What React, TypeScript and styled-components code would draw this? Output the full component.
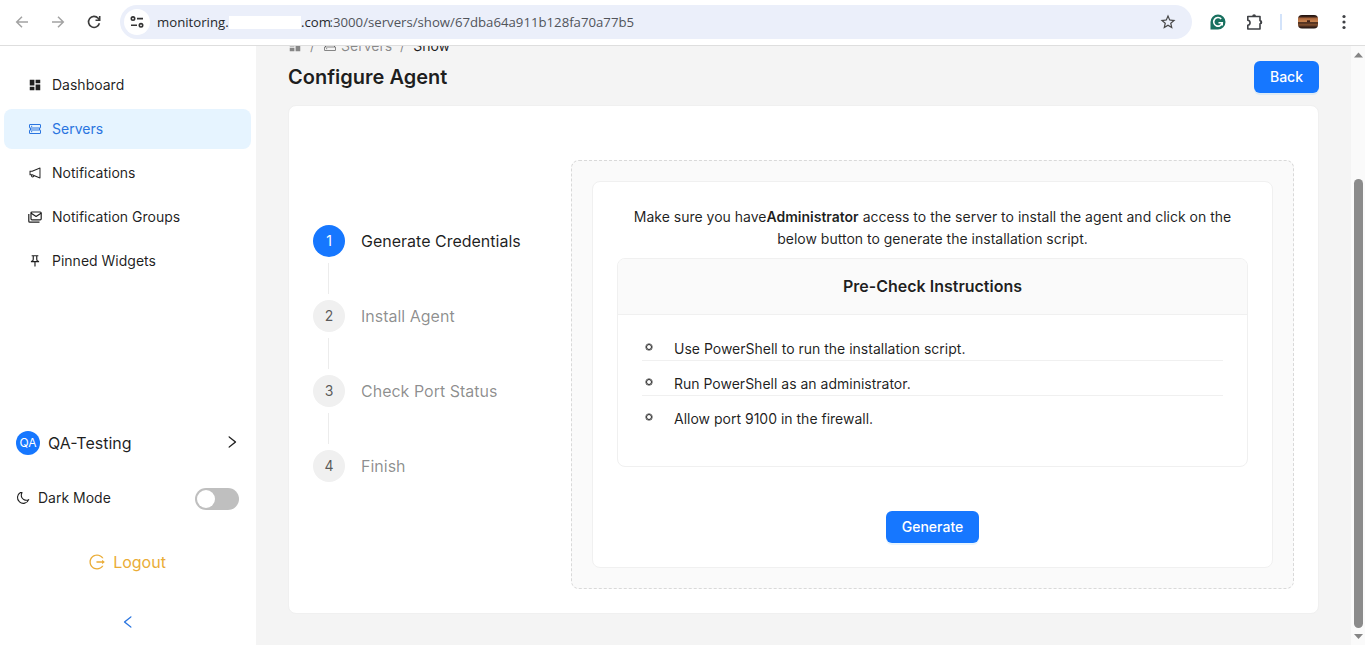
import React from "react";
import styled, { createGlobalStyle } from "styled-components";
import { MdDashboard, MdOutlinePushPin, MdOutlineStarBorder } from "react-icons/md";
import { AiOutlineNotification, AiOutlineLogout, AiOutlineLeft, AiOutlineRight } from "react-icons/ai";

const GlobalStyle = createGlobalStyle`
  *, *::before, *::after { box-sizing: border-box; }
  html, body, #root { height: 645px; margin: 0; overflow: hidden; }
  body { font-family: Inter, sans-serif; font-size: 14px; line-height: 22px; color: rgba(0,0,0,.88); background: #f4f4f4; }
  svg { display: block; flex: none; }
`;

const Window = styled.div`display: flex; flex-direction: column; height: 645px;`;

const Toolbar = styled.header`
  flex: none; display: flex; align-items: center; height: 46px; padding: 0 19px 1px 14px;
  background: #fff; border-bottom: 1px solid #dedede; color: #474747;
`;
const NavIcons = styled.div`display: flex; gap: 20px; width: 106px; align-items: center;`;
const AddressBar = styled.div`
  display: flex; align-items: center; width: 1072px; height: 34px; border-radius: 17px;
  background: #ebeffa; padding: 0 15px 0 4px;
`;
const SiteInfo = styled.span`
  display: flex; align-items: center; justify-content: center; width: 26px; height: 26px;
  border-radius: 50%; background: #fff;
`;
const Url = styled.div`
  display: flex; align-items: center; flex: 1; padding-left: 7px; white-space: pre;
  font: 13.2px/20px "Open Sans", sans-serif; color: #51545a;
`;
const Host = styled.span<{ $width: number }>`
  color: #26282c; width: ${p => p.$width}px;
`;
const Redacted = styled.span`width: 72px; height: 13px; background: #fff;`;
const Extensions = styled.div`display: flex; align-items: center; flex: 1; padding-left: 18px;`;
const Divider = styled.span`width: 2px; height: 16px; margin: 0 16px; background: #d3e3fa;`;
const Puzzle = styled.span`margin-left: 20px;`;
const Menu = styled.span`margin-left: auto;`;

const Body = styled.div`display: flex; flex: 1; min-height: 0;`;
const Sidebar = styled.aside`
  display: flex; flex-direction: column; width: 257px; background: #fff;
  border-right: 1px solid #f4f4f4; padding-top: 19px;
`;
const NavList = styled.nav`display: flex; flex-direction: column; gap: 4px; padding: 0 5px 0 4px;`;
const NavItem = styled.a<{ $active?: boolean }>`
  display: flex; align-items: center; gap: 10px; height: 40px; padding-left: 24px; border-radius: 8px;
  color: ${p => (p.$active ? "#2a75e0" : "rgba(0,0,0,.88)")};
  background: ${p => (p.$active ? "#e6f4ff" : "transparent")};
`;
const SidebarFooter = styled.div`display: flex; flex-direction: column; margin-top: auto; height: 217px;`;
const Account = styled.div`
  display: flex; align-items: center; height: 30px; padding: 0 16px; font-size: 16px;
`;
const Avatar = styled.span`
  width: 24px; height: 24px; line-height: 24px; border-radius: 50%; background: #1677ff; color: #fff;
  font-size: 12px; text-align: center; margin-right: 8px;
`;
const AccountArrow = styled.span`margin-left: auto; padding-bottom: 2px;`;
const ThemeRow = styled.div`
  display: flex; align-items: center; gap: 8px; height: 22px; margin-top: 30px; padding: 0 17px 0 16px;
`;
const ThemeLabel = styled.span`display: flex; align-items: center; gap: 8px; padding-bottom: 2px;`;
const Switch = styled.span`
  width: 44px; height: 22px; padding: 2px; border-radius: 11px; background: #bfbfbf; margin-left: auto;
`;
const Knob = styled.span`display: block; width: 18px; height: 18px; border-radius: 50%; background: #fff;`;
const Logout = styled.a`
  display: flex; align-items: center; justify-content: center; gap: 7px; height: 24px; margin-top: 40px;
  padding-right: 2px; font-size: 16px; color: #eaac36;
`;
const Collapse = styled.div`display: flex; justify-content: center; color: #2a75e0; margin-top: 40px;`;

const Main = styled.main`flex: 1; padding: 0 32px 0 31px; overflow: hidden;`;
const CrumbClip = styled.div`display: flex; align-items: flex-end; height: 11px; overflow: hidden;`;
const Crumbs = styled.div`
  display: flex; align-items: center; height: 22px; flex: none; color: rgba(0,0,0,.45);
`;
const CrumbSlash = styled.span`margin: 0 8px;`;
const Current = styled.span`color: rgba(0,0,0,.88);`;
const CrumbLink = styled.span`display: flex; align-items: center; gap: 4px;`;
const PageHead = styled.div`
  display: flex; align-items: center; justify-content: space-between; height: 38px; margin-top: 1px;
`;
const Title = styled.h1`margin: 0; font-size: 20px; line-height: 28px; font-weight: 600;`;
const Button = styled.button`
  height: 32px; padding: 0 16px; border: 0; border-radius: 6px; background: #1677ff; color: #fff;
  font: 500 14px/22px Inter, sans-serif; box-shadow: 0 2px 0 rgba(5,145,255,.1);
`;
const Card = styled.section`
  display: flex; height: 509px; margin-top: 9px; padding: 54px 24px 24px; background: #fff;
  border: 1px solid #f0f0f0; border-radius: 8px;
`;
const Steps = styled.ol`list-style: none; margin: 65px 0 0; padding: 0; width: 258px;`;
const Step = styled.li`display: flex; height: 75px; gap: 16px;`;
const StepRail = styled.div`display: flex; flex-direction: column; align-items: center; width: 32px;`;
const StepNumber = styled.span<{ $active?: boolean }>`
  width: 32px; height: 32px; line-height: 32px; border-radius: 50%; text-align: center;
  background: ${p => (p.$active ? "#1677ff" : "#f0f0f0")};
  color: ${p => (p.$active ? "#fff" : "rgba(0,0,0,.65)")};
`;
const StepLine = styled.span`width: 1px; height: 31px; margin: 6px 1px 0 0; background: #ececec;`;
const StepLabel = styled.span<{ $active?: boolean }>`
  font-size: 16px; line-height: 32px; color: ${p => (p.$active ? "rgba(0,0,0,.88)" : "rgba(0,0,0,.45)")};
`;
const Dashed = styled.div`
  flex: 1; height: 429px; padding: 20px; border: 1px dashed #d9d9d9; border-radius: 8px; background: #fafafa;
`;
const Panel = styled.div`
  display: flex; flex-direction: column; align-items: center; height: 387px; padding: 24px;
  background: #fff; border: 1px solid #f0f0f0; border-radius: 8px;
`;
const Intro = styled.p`margin: 0; width: 630px; padding: 0 8px; text-align: center;`;
const Bold = styled.strong`font-weight: 600;`;
const CheckCard = styled.div`
  width: 631px; height: 209px; margin: 8px 0 44px; border: 1px solid #f0f0f0; border-radius: 8px; overflow: hidden;
`;
const CheckHead = styled.h2`
  margin: 0; height: 56px; line-height: 55px; font-size: 16px; font-weight: 600; text-align: center;
  background: #fafafa; border-bottom: 1px solid #f0f0f0;
`;
const CheckList = styled.ul`list-style: none; margin: 0; padding: 11px 24px;`;
const CheckItem = styled.li`
  display: flex; align-items: center; height: 35px; padding: 12px 0 0 4px; gap: 22px;
  border-bottom: 1px solid #f0f0f0;
  &:last-child { border-color: transparent; }
`;
const Bullet = styled.span`
  width: 6px; height: 6px; margin-bottom: 4px; border: 1px solid #222; border-radius: 50%;
  box-shadow: 0 0 0 .5px #333;
`;

const ScrollTrack = styled.div`
  display: flex; flex-direction: column; align-items: center; width: 14px; padding: 6px 0 5px; background: #fafafa;
`;
const ScrollThumb = styled.span`width: 9px; height: 449px; margin: auto 0 6px; border-radius: 5px; background: #8b8b8b;`;

const Arrow = ({ flip }: { flip?: boolean }) => (
  <svg width="16" height="16" viewBox="0 0 16 16" fill="none" stroke="#a3a3a3" strokeWidth="1.5"
    transform={flip ? "scale(-1 1)" : undefined}>
    <path d="M14 8H3M8 2.7 2.7 8 8 13.3" />
  </svg>
);
const Reload = () => (
  <svg width="16" height="16" viewBox="0 0 16 16" fill="none" stroke="#3c3c3c" strokeWidth="1.6">
    <path d="M13.4 9.2A5.5 5.5 0 1 1 12.2 4.3L13.6 5.8M13.7 2v4.2H9.5" />
  </svg>
);
const Tune = () => (
  <svg width="14" height="14" viewBox="0 0 14 14" fill="none" stroke="#333" strokeWidth="1.6">
    <circle cx="3" cy="3.6" r="1.7" /><path d="M7 3.6h6M1 10.3h6" /><circle cx="11" cy="10.3" r="1.7" />
  </svg>
);
const Grammarly = () => (
  <svg width="16" height="16" viewBox="0 0 16 16">
    <path d="M8 0.5A7.5 7.5 0 1 1 8 15.5H.5V8A7.5 7.5 0 0 1 8 .5" fill="#18705f" />
    <path d="M11.2 4.9A4.3 4.3 0 1 0 12.2 8.8H8.5M12.2 8.8v2.7" fill="none" stroke="#fff" strokeWidth="1.6" />
  </svg>
);
const PuzzleIcon = () => (
  <svg width="18" height="18" viewBox="0 0 18 18" fill="none" stroke="#3f4145" strokeWidth="1.6" strokeLinejoin="round">
    <path d="M1.8 3.5H14v4.2a1.5 1.5 0 0 1 0 3V16H1.8v-3.7c3-.4 3-4.7 0-5.1Z" />
    <path d="M6.2 3.2a1.9 1.9 0 0 1 3.8 0ZM14.2 7.4a1.8 1.8 0 0 1 0 3.6Z" fill="#3f4145" stroke="none" />
  </svg>
);
const Profile = () => (
  <svg width="20" height="14" viewBox="0 0 20 14">
    <defs>
      <clipPath id="pic"><rect width="20" height="13.5" rx="4" /></clipPath>
      <linearGradient id="dusk" x1="0" y1="0" x2="0" y2="1">
        <stop offset="0" stopColor="#1c110e" /><stop offset=".12" stopColor="#3a2117" />
        <stop offset=".24" stopColor="#a8643a" /><stop offset=".46" stopColor="#cb8652" />
        <stop offset=".55" stopColor="#41261a" /><stop offset=".7" stopColor="#85522f" />
        <stop offset=".85" stopColor="#3a2219" /><stop offset="1" stopColor="#17100e" />
      </linearGradient>
    </defs>
    <g clipPath="url(#pic)">
      <path d="M0 0h20v14H0z" fill="url(#dusk)" />
      <path d="M9 5.2h3v2H9z" fill="#422216" />
    </g>
  </svg>
);
const Dots = () => (
  <svg width="4" height="16" viewBox="0 0 4 16" fill="#3f4145">
    <circle cx="2" cy="2.5" r="1.6" /><circle cx="2" cy="8" r="1.6" /><circle cx="2" cy="13.5" r="1.6" />
  </svg>
);
const ServersIcon = () => (
  <svg width="14" height="14" viewBox="0 0 14 14" fill="none" stroke="currentColor" strokeWidth="1" strokeLinejoin="round">
    <rect x="1.5" y="2.5" width="11" height="3.5" rx=".3" /><rect x="1.5" y="8" width="11" height="3.5" rx=".3" />
    <path d="M2.5 6v2M11.5 6v2M3 4.3h1.2M3 9.7h1.2" />
  </svg>
);
const MailGroup = () => (
  <svg width="14" height="14" viewBox="0 0 14 14" fill="none" stroke="currentColor" strokeWidth="1.2" strokeLinejoin="round">
    <rect x="3" y="2" width="10.2" height="7.8" rx="1" /><path d="m3.2 3.2 4.9 3.2L13 3.2M.8 4v7.2q0 1 1 1h9.7" />
  </svg>
);
const Moon = () => (
  <svg width="14" height="14" viewBox="0 0 14 14" fill="none" stroke="currentColor" strokeWidth="1.1" strokeLinejoin="round">
    <path d="M4.4 1.5A5.8 5.8 0 1 0 12.7 8.6C10 10.3 4.5 8.5 5.4 3.2L6 1.6Z" />
  </svg>
);
const Triangle = ({ down }: { down?: boolean }) => (
  <svg width="9" height="6" viewBox="0 0 9 6" fill="#858585"><path d={down ? "M0 0h9L4.5 5Z" : "M0 5.5h9L4.5.5Z"} /></svg>
);

const navigation = [
  { label: "Dashboard", icon: <MdDashboard size={14} /> },
  { label: "Servers", icon: <ServersIcon />, active: true },
  { label: "Notifications", icon: <AiOutlineNotification size={14} /> },
  { label: "Notification Groups", icon: <MailGroup /> },
  { label: "Pinned Widgets", icon: <MdOutlinePushPin size={14} /> },
];
const steps = ["Generate Credentials", "Install Agent", "Check Port Status", "Finish"];
const checks = [
  "Use PowerShell to run the installation script.",
  "Run PowerShell as an administrator.",
  "Allow port 9100 in the firewall.",
];

export default function App() {
  return (
    <Window>
      <GlobalStyle />
      <Toolbar>
        <NavIcons><Arrow /><Arrow flip /><Reload /></NavIcons>
        <AddressBar>
          <SiteInfo><Tune /></SiteInfo>
          <Url>
            <Host $width={72}>monitoring.</Host><Redacted /><Host $width={28.5}>.com</Host>
            <span>:3000/servers/show/67dba64a911b128fa70a77b5</span>
          </Url>
          <MdOutlineStarBorder size={18} />
        </AddressBar>
        <Extensions>
          <Grammarly /><Puzzle><PuzzleIcon /></Puzzle><Divider /><Profile /><Menu><Dots /></Menu>
        </Extensions>
      </Toolbar>
      <Body>
        <Sidebar>
          <NavList>
            {navigation.map(n => <NavItem key={n.label} $active={n.active}>{n.icon}{n.label}</NavItem>)}
          </NavList>
          <SidebarFooter>
            <Account><Avatar>QA</Avatar>QA-Testing<AccountArrow><AiOutlineRight size={16} /></AccountArrow></Account>
            <ThemeRow><ThemeLabel><Moon />Dark Mode</ThemeLabel><Switch><Knob /></Switch></ThemeRow>
            <Logout><AiOutlineLogout size={18} />Logout</Logout>
            <Collapse><AiOutlineLeft size={16} /></Collapse>
          </SidebarFooter>
        </Sidebar>
        <Main>
          <CrumbClip>
            <Crumbs>
              <MdDashboard size={14} /><CrumbSlash>/</CrumbSlash>
              <CrumbLink><ServersIcon />Servers</CrumbLink><CrumbSlash>/</CrumbSlash><Current>Show</Current>
            </Crumbs>
          </CrumbClip>
          <PageHead><Title>Configure Agent</Title><Button>Back</Button></PageHead>
          <Card>
            <Steps>
              {steps.map((s, i) => (
                <Step key={s}>
                  <StepRail><StepNumber $active={i === 0}>{i + 1}</StepNumber>{i < 3 && <StepLine />}</StepRail>
                  <StepLabel $active={i === 0}>{s}</StepLabel>
                </Step>
              ))}
            </Steps>
            <Dashed>
              <Panel>
                <Intro>
                  Make sure you have<Bold>Administrator</Bold> access to the server to install the agent and click on the
                  below button to generate the installation script.
                </Intro>
                <CheckCard>
                  <CheckHead>Pre-Check Instructions</CheckHead>
                  <CheckList>{checks.map(c => <CheckItem key={c}><Bullet />{c}</CheckItem>)}</CheckList>
                </CheckCard>
                <Button>Generate</Button>
              </Panel>
            </Dashed>
          </Card>
        </Main>
        <ScrollTrack><Triangle /><ScrollThumb /><Triangle down /></ScrollTrack>
      </Body>
    </Window>
  );
}
